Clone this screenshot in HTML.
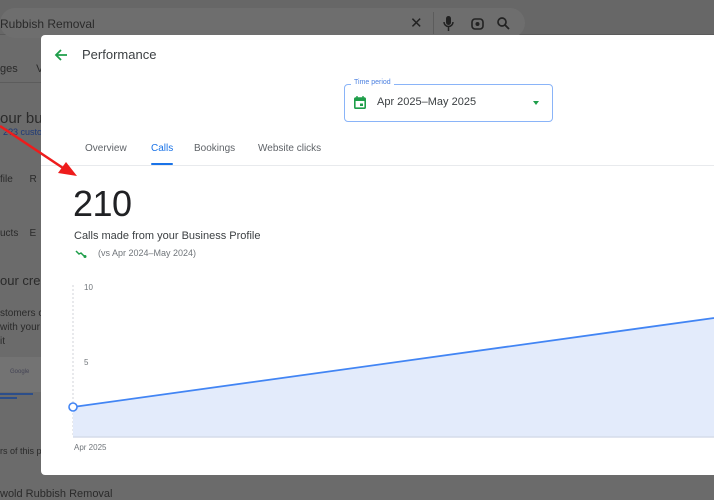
<!DOCTYPE html>
<html><head><meta charset="utf-8"><style>
*{margin:0;padding:0;box-sizing:border-box}
body{width:714px;height:500px;overflow:hidden;background:#6b6b6b;font-family:"Liberation Sans",sans-serif;position:relative}
.bg{position:absolute;color:#2a2a2a;font-size:11px;white-space:nowrap}
.modal{position:absolute;left:41px;top:35px;width:680px;height:440px;background:#fff;border-radius:4px}
.m{position:absolute;white-space:nowrap}
</style></head><body>
<div style="position:absolute;left:0;top:0;width:714px;height:34px;background:#676767"></div>
<div style="position:absolute;left:0;top:34px;width:714px;height:1px;background:#5a5a5a"></div>
<div style="position:absolute;left:0;top:8px;width:525px;height:30px;border-radius:15px;background:#6e6e6e"></div>
<div class="bg" style="left:0;top:17px;font-size:12px">Rubbish Removal</div>
<div class="bg" style="left:410px;top:14px;font-size:15px;color:#222">✕</div>
<div style="position:absolute;left:433px;top:12px;width:1px;height:22px;background:#5c5c5c"></div>
<svg style="position:absolute;left:442px;top:15px" width="70" height="18" viewBox="0 0 70 18">
<rect x="4" y="1" width="5" height="9" rx="2.5" fill="#222"/><path d="M2 7a4.5 4.5 0 0 0 9 0M6.5 12v4" stroke="#222" stroke-width="1.5" fill="none"/>
<rect x="30" y="4" width="11" height="10" rx="3" fill="none" stroke="#222" stroke-width="1.6"/><circle cx="35.5" cy="9" r="2" fill="#222"/>
<circle cx="60" cy="7" r="4" fill="none" stroke="#222" stroke-width="1.7"/><path d="M63 10l4 4" stroke="#222" stroke-width="1.8"/>
</svg>
<div class="bg" style="left:0;top:63px">ges &nbsp;&nbsp;&nbsp;&nbsp;&nbsp;Vi</div>
<div style="position:absolute;left:0;top:82px;width:41px;height:1px;background:#5c5c5c"></div>
<div class="bg" style="left:0;top:110px;font-size:15px">our bus</div>
<div class="bg" style="left:3px;top:127px;font-size:9px;color:#1e3a78">2?3 custo</div>
<div class="bg" style="left:0;top:174px;font-size:10px">file &nbsp;&nbsp;&nbsp;&nbsp;&nbsp;R</div>
<div class="bg" style="left:0;top:228px;font-size:10px">ucts &nbsp;&nbsp;&nbsp;E</div>
<div class="bg" style="left:0;top:273px;font-size:13px">our cred</div>
<div class="bg" style="left:0;top:307px;font-size:10px;line-height:14px">stomers c<br>with your<br>it</div>
<div style="position:absolute;left:0;top:357px;width:41px;height:35px;background:#737373"></div>
<div class="bg" style="left:10px;top:369px;font-size:6px;color:#445">Google</div>
<div style="position:absolute;left:0;top:393px;width:33px;height:2px;background:#2c4e8a"></div>
<div style="position:absolute;left:0;top:397px;width:17px;height:2px;background:#2c4e8a"></div>
<div class="bg" style="left:0;top:446px;font-size:9px">rs of this pr</div>
<div class="bg" style="left:0;top:488px;font-size:11px">wold Rubbish Removal</div>

<div class="modal">
<svg class="m" style="left:12px;top:12px" width="16" height="16" viewBox="0 0 16 16"><path d="M14 8H3M8 3L3 8l5 5" stroke="#1e9e4a" stroke-width="1.8" fill="none"/></svg>
<div class="m" style="left:41px;top:12px;font-size:13px;color:#3c4043">Performance</div>
<div class="m" style="left:303px;top:49px;width:209px;height:38px;border:1.5px solid #8ab4f8;border-radius:4px"></div>
<div class="m" style="left:310px;top:44px;background:#fff;padding:0 3px;font-size:7px;color:#4a7fe0">Time period</div>
<svg class="m" style="left:313px;top:61px" width="12" height="13" viewBox="0 0 12 13"><rect x="0.8" y="2" width="10.4" height="10.2" rx="1" fill="none" stroke="#1e9e4a" stroke-width="1.6"/><rect x="0.8" y="2" width="10.4" height="3" fill="#1e9e4a"/><rect x="6" y="7.5" width="3" height="2.5" fill="#1e9e4a"/><path d="M3 0v3M9 0v3" stroke="#1e9e4a" stroke-width="1.4"/></svg>
<div class="m" style="left:336px;top:61px;font-size:11px;color:#3c4043">Apr 2025–May 2025</div>
<div class="m" style="left:492px;top:66px;width:0;height:0;border-left:3.5px solid transparent;border-right:3.5px solid transparent;border-top:4px solid #1e9e4a"></div>
<div class="m" style="left:44px;top:108px;font-size:10px;color:#5f6368">Overview</div>
<div class="m" style="left:110px;top:108px;font-size:10px;color:#1a73e8">Calls</div>
<div class="m" style="left:110px;top:128px;width:22px;height:2px;background:#1a73e8;border-radius:1px"></div>
<div class="m" style="left:153px;top:108px;font-size:10px;color:#5f6368">Bookings</div>
<div class="m" style="left:217px;top:108px;font-size:10px;color:#5f6368">Website clicks</div>
<div class="m" style="left:0;top:130px;width:680px;height:1px;background:#e8eaed"></div>
<div class="m" style="left:32px;top:148px;font-size:36px;color:#202124;letter-spacing:-0.5px">210</div>
<div class="m" style="left:33px;top:195px;font-size:11px;color:#3c4043">Calls made from your Business Profile</div>
<svg class="m" style="left:34px;top:214px" width="12" height="10" viewBox="0 0 12 10"><path d="M1 2l3 3 2-1 3 3" stroke="#1e9e4a" stroke-width="1.5" fill="none"/><circle cx="10" cy="7.5" r="1.5" fill="#1e9e4a"/></svg>
<div class="m" style="left:57px;top:213px;font-size:9px;color:#70757a">(vs Apr 2024–May 2024)</div>
<div class="m" style="left:43px;top:248px;font-size:8px;color:#70757a">10</div>
<div class="m" style="left:43px;top:323px;font-size:8px;color:#70757a">5</div>
<div class="m" style="left:33px;top:408px;font-size:8px;color:#70757a">Apr 2025</div>
<svg class="m" style="left:0;top:240px" width="680" height="200" viewBox="0 0 680 200">
<path d="M32 10V162" stroke="#d0d3d8" stroke-width="1" stroke-dasharray="2,2"/>
<path d="M32 132L673 43V162H32Z" fill="#e3ebfb"/>
<path d="M32 162H673" stroke="#d5dcea" stroke-width="1.5"/>
<path d="M32 132L673 43" stroke="#4285f4" stroke-width="1.8" fill="none"/>
<circle cx="32" cy="132" r="4" fill="#fff" stroke="#4285f4" stroke-width="1.6"/>
</svg>
</div>
<svg style="position:absolute;left:0;top:0" width="714" height="500"><path d="M0 126L66 170" stroke="#ee1c1c" stroke-width="2.5"/><path d="M77 176L58 173L66 162Z" fill="#ee1c1c"/></svg>
</body></html>
